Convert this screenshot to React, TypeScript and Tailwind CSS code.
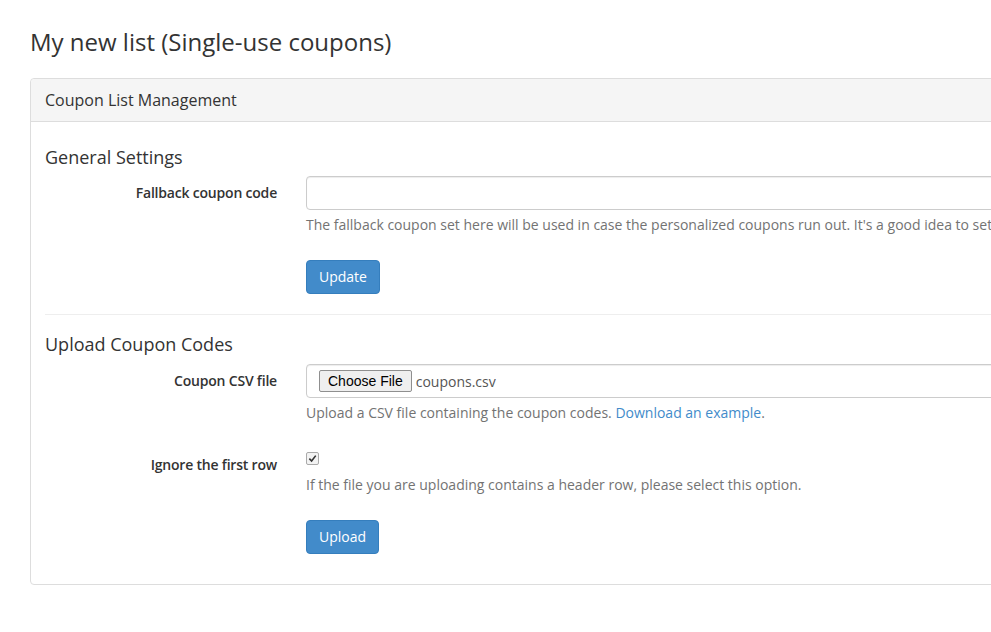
const FormRow = ({
  label,
  children,
  labelClass = "pt-[7px]",
}: {
  label: string;
  children: React.ReactNode;
  labelClass?: string;
}) => (
  <div className="flex">
    <label className={`w-[232px] shrink-0 text-right font-semibold leading-5 tracking-[-0.2px] ${labelClass}`}>
      {label}
    </label>
    <div className="ml-[29px] flex-1">{children}</div>
  </div>
);

const BlueButton = ({ children }: { children: React.ReactNode }) => (
  <button className="h-[34px] rounded-[4px] border border-[#357ebd] bg-[#428bca] px-3 text-[14px] leading-5 text-white">
    {children}
  </button>
);

export default function App() {
  return (
    <div className="w-full min-h-[632px] overflow-hidden bg-white text-[14px] text-[#333] font-['Open_Sans',sans-serif]">
      <div className="w-[1400px] pl-[30px] pt-[25px]">
        <h1 className="text-[24px] leading-[34px] font-normal">My new list (Single-use coupons)</h1>

        <div className="mt-[19px] rounded-[4px] border border-[#ddd]">
          <div className="h-[43px] border-b border-[#ddd] bg-[#f5f5f5] px-[14px] pt-[10px] text-[16px] leading-[22px] rounded-t-[4px]">
            Coupon List Management
          </div>

          <div className="px-[14px] pt-[22px] pb-[30px]">
            <div className="text-[18px] leading-[26px]">General Settings</div>
            <div className="mt-[6px]">
              <FormRow label="Fallback coupon code">
                <div className="h-[34px] rounded-[4px] border border-[#ccc] shadow-[inset_0_1px_1px_rgba(0,0,0,0.075)]" />
                <p className="mt-[5px] leading-5 text-[#737373]">
                  The fallback coupon set here will be used in case the personalized coupons run out. It's a good idea to set one so your subscribers always receive a code.
                </p>
              </FormRow>
            </div>
            <div className="mt-[25px]">
              <FormRow label="" labelClass="">
                <BlueButton>Update</BlueButton>
              </FormRow>
            </div>

            <hr className="mt-[20px] border-t border-[#eee]" />

            <div className="mt-[16px] text-[18px] leading-[26px]">Upload Coupon Codes</div>
            <div className="mt-[7px]">
              <FormRow label="Coupon CSV file">
                <div className="flex h-[34px] items-center rounded-[4px] border border-[#ccc] px-3 shadow-[inset_0_1px_1px_rgba(0,0,0,0.075)]">
                  <span className="flex h-[22px] items-center rounded-[2px] border border-[#8f8f8f] bg-[#efefef] px-[8px] text-[14px] text-black font-['Liberation_Sans',Arial,sans-serif]">
                    Choose File
                  </span>
                  <span className="ml-[4px] text-[#555]">coupons.csv</span>
                </div>
                <p className="mt-[5px] leading-5 text-[#737373]">
                  Upload a CSV file containing the coupon codes.{" "}
                  <a className="text-[#428bca]" href="#">Download an example</a>.
                </p>
              </FormRow>
            </div>
            <div className="mt-[25px]">
              <FormRow label="Ignore the first row">
                <div className="mt-[4px] flex h-[13px] w-[13px] items-center justify-center rounded-[2px] border border-[#aaa] bg-[#f3f3f3]">
                  <svg width="9" height="9" viewBox="0 0 10 10">
                    <path d="M1.5 5.2 L4 7.8 L8.6 1.8" fill="none" stroke="#333" strokeWidth="1.8" />
                  </svg>
                </div>
                <p className="mt-[10px] leading-5 text-[#737373]">
                  If the file you are uploading contains a header row, please select this option.
                </p>
              </FormRow>
            </div>
            <div className="mt-[25px]">
              <FormRow label="" labelClass="">
                <BlueButton>Upload</BlueButton>
              </FormRow>
            </div>
          </div>
        </div>
      </div>
    </div>
  );
}
